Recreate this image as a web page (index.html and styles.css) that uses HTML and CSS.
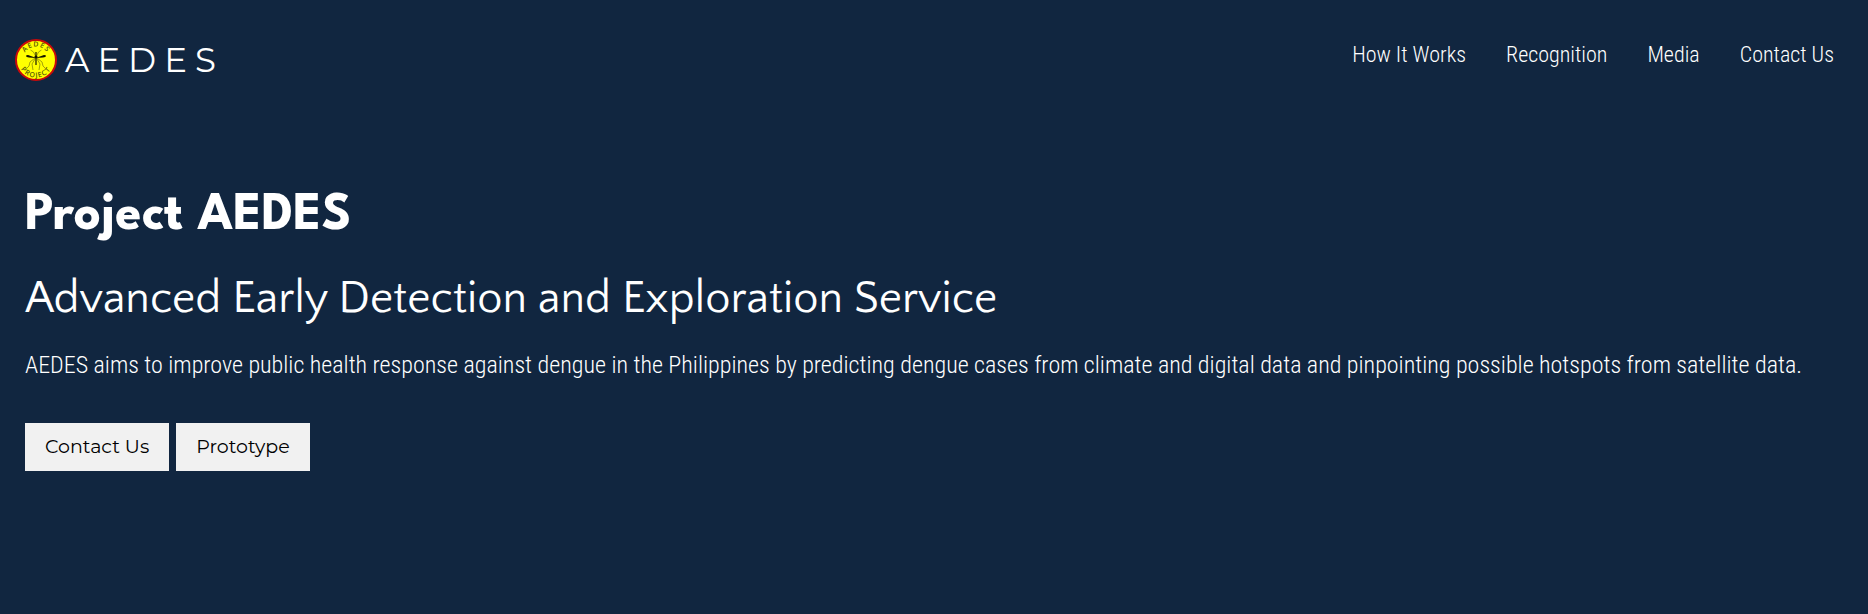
FILE: index.html
```html
<!DOCTYPE html>
<html lang="en">
<head>
<meta charset="utf-8">
<meta name="viewport" content="width=device-width, initial-scale=1">
<title>Project AEDES</title>
<link rel="stylesheet" href="styles.css">
</head>
<body>
<header class="site-header">
  <a class="brand" href="#">
    <svg class="badge" viewBox="0 0 42 42" aria-hidden="true">
      <defs>
        <path id="arc-top" d="M8 20.500a13 13 0 0 1 26 0"/>
        <path id="arc-bottom" d="M3 20.500a18 18 0 0 0 36 0"/>
      </defs>
      <circle cx="21" cy="21" r="20" fill="#ff0" stroke="#c80a0a" stroke-width="2"/>
      <text class="badge-text"><textPath href="#arc-top" startOffset="50%">AEDES</textPath></text>
      <text class="badge-text"><textPath href="#arc-bottom" startOffset="50%">PROJECT</textPath></text>
      <g fill="none" stroke="#8a8a0a" stroke-width=".8">
        <path d="M20.500 17l-2-4-3-2M21.500 17l2-4 3-2M20 19l-5 4-1 4-2 2M22 19l5 4 1 4 2 2M20 20l-3 5 1 6M22 20l3 5-1 6"/>
      </g>
      <path d="M20 18.500L13 16q-2 0-2 1t3 1.500l6 .5zM22 18.500L29 16q2 0 2 1t-3 1.500l-6 .5z" fill="#151500"/>
      <path d="M21 13v13" stroke="#151500" stroke-width="1.200"/>
      <circle cx="21" cy="18" r="1.600" fill="#151500"/>
    </svg>
    <span class="wordmark">AEDES</span>
  </a>
  <nav class="menu" aria-label="Main">
    <a href="#how">How It Works</a>
    <a href="#recognition">Recognition</a>
    <a href="#media">Media</a>
    <a href="#contact">Contact Us</a>
  </nav>
</header>
<main class="hero">
  <h1>Project AEDES</h1>
  <h2>Advanced Early Detection and Exploration Service</h2>
  <p>AEDES aims to improve public health response against dengue in the Philippines by predicting dengue cases from climate and digital data and pinpointing possible hotspots from satellite data.</p>
  <div class="actions">
    <button type="button">Contact Us</button>
    <button type="button">Prototype</button>
  </div>
</main>
</body>
</html>
```
FILE: styles.css
```css
* { box-sizing: border-box; }
body {
  margin: 0;
  min-height: 100vh;
  background: #112640;
  color: #fff;
  font-family: "Roboto Condensed", Roboto, sans-serif;
  font-weight: 300;
}
.site-header {
  display: flex;
  justify-content: space-between;
  align-items: flex-start;
  padding: 38px 34px 0 15px;
}
.brand {
  display: flex;
  align-items: center;
  gap: 8px;
  color: #fff;
  text-decoration: none;
}
.badge { width: 42px; height: 42px; }
.badge-text {
  font-family: "Open Sans", sans-serif;
  font-size: 7px;
  font-weight: 600;
  fill: #55550a;
  text-anchor: middle;
  letter-spacing: 1px;
}
.wordmark {
  font-family: Montserrat, Lato, sans-serif;
  font-size: 34px;
  font-weight: 400;
  line-height: 44px;
  letter-spacing: 8px;
}
.menu {
  display: flex;
  gap: 40px;
  font-size: 22px;
  line-height: 34px;
}
.menu a { color: #fff; text-decoration: none; }
.hero { padding: 105px 25px 64px; }
h1, h2, p { margin: 0; }
h1 {
  font-family: "League Spartan", Lato, sans-serif;
  font-size: 53px;
  font-weight: 700;
  line-height: 60px;
}
h2 {
  margin-top: 24px;
  font-family: "Quattrocento Sans", Lato, sans-serif;
  font-size: 45px;
  font-weight: 400;
  line-height: 56px;
}
p {
  margin-top: 20px;
  font-size: 24px;
  line-height: 36px;
}
.actions { display: flex; flex-wrap: wrap; gap: 7px; margin-top: 40px; }
button {
  padding: 12px 20px;
  border: 0;
  background: #f1f1f1;
  color: #000;
  font-family: Montserrat, Inter, sans-serif;
  font-size: 19px;
  line-height: 24px;
}
```
